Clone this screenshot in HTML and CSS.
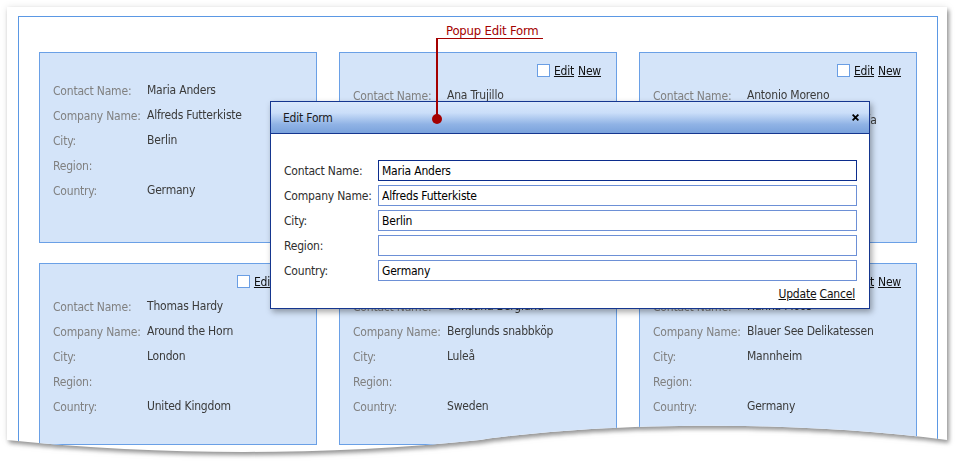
FILE: index.html
```html
<!DOCTYPE html>
<html lang="en">
<head>
<meta charset="utf-8">
<title>Popup Edit Form</title>
<link rel="stylesheet" href="styles.css">
</head>
<body>
<div class="stage">
  <div class="shot">
    <div class="paper">
      <div class="frame">
        <div class="card card--editing">
          <div class="row"><span class="lbl">Contact Name:</span><span class="val">Maria Anders</span></div>
          <div class="row"><span class="lbl">Company Name:</span><span class="val">Alfreds Futterkiste</span></div>
          <div class="row"><span class="lbl">City:</span><span class="val">Berlin</span></div>
          <div class="row"><span class="lbl">Region:</span><span class="val"></span></div>
          <div class="row"><span class="lbl">Country:</span><span class="val">Germany</span></div>
        </div>
        <div class="card">
          <div class="card-head"><span class="check"></span><a class="link" href="#">Edit</a><a class="link" href="#">New</a></div>
          <div class="row"><span class="lbl">Contact Name:</span><span class="val">Ana Trujillo</span></div>
          <div class="row"><span class="lbl">Company Name:</span><span class="val">Ana Trujillo Emparedados y helados</span></div>
          <div class="row"><span class="lbl">City:</span><span class="val">México D.F.</span></div>
          <div class="row"><span class="lbl">Region:</span><span class="val"></span></div>
          <div class="row"><span class="lbl">Country:</span><span class="val">Mexico</span></div>
        </div>
        <div class="card">
          <div class="card-head"><span class="check"></span><a class="link" href="#">Edit</a><a class="link" href="#">New</a></div>
          <div class="row"><span class="lbl">Contact Name:</span><span class="val">Antonio Moreno</span></div>
          <div class="row"><span class="lbl">Company Name:</span><span class="val">Antonio Moreno Taquería</span></div>
          <div class="row"><span class="lbl">City:</span><span class="val">México D.F.</span></div>
          <div class="row"><span class="lbl">Region:</span><span class="val"></span></div>
          <div class="row"><span class="lbl">Country:</span><span class="val">Mexico</span></div>
        </div>
        <div class="card">
          <div class="card-head"><span class="check"></span><a class="link" href="#">Edit</a><a class="link" href="#">New</a></div>
          <div class="row"><span class="lbl">Contact Name:</span><span class="val">Thomas Hardy</span></div>
          <div class="row"><span class="lbl">Company Name:</span><span class="val">Around the Horn</span></div>
          <div class="row"><span class="lbl">City:</span><span class="val">London</span></div>
          <div class="row"><span class="lbl">Region:</span><span class="val"></span></div>
          <div class="row"><span class="lbl">Country:</span><span class="val">United Kingdom</span></div>
        </div>
        <div class="card">
          <div class="card-head"><span class="check"></span><a class="link" href="#">Edit</a><a class="link" href="#">New</a></div>
          <div class="row"><span class="lbl">Contact Name:</span><span class="val">Christina Berglund</span></div>
          <div class="row"><span class="lbl">Company Name:</span><span class="val">Berglunds snabbköp</span></div>
          <div class="row"><span class="lbl">City:</span><span class="val">Luleå</span></div>
          <div class="row"><span class="lbl">Region:</span><span class="val"></span></div>
          <div class="row"><span class="lbl">Country:</span><span class="val">Sweden</span></div>
        </div>
        <div class="card">
          <div class="card-head"><span class="check"></span><a class="link" href="#">Edit</a><a class="link" href="#">New</a></div>
          <div class="row"><span class="lbl">Contact Name:</span><span class="val">Hanna Moos</span></div>
          <div class="row"><span class="lbl">Company Name:</span><span class="val">Blauer See Delikatessen</span></div>
          <div class="row"><span class="lbl">City:</span><span class="val">Mannheim</span></div>
          <div class="row"><span class="lbl">Region:</span><span class="val"></span></div>
          <div class="row"><span class="lbl">Country:</span><span class="val">Germany</span></div>
        </div>
      </div>
    </div>
  </div>

  <div class="popup">
    <div class="popup-head">
      <span class="popup-title">Edit Form</span>
      <svg class="close" width="7" height="7" viewBox="0 0 7 7"><path d="M0.6 0.6 L6.4 6.4 M6.4 0.6 L0.6 6.4" stroke="#000" stroke-width="1.8" fill="none"/></svg>
    </div>
    <div class="popup-body">
      <label class="f-lbl">Contact Name:</label><input class="f-input f-input--focus" value="Maria Anders">
      <label class="f-lbl">Company Name:</label><input class="f-input" value="Alfreds Futterkiste">
      <label class="f-lbl">City:</label><input class="f-input" value="Berlin">
      <label class="f-lbl">Region:</label><input class="f-input" value="">
      <label class="f-lbl">Country:</label><input class="f-input" value="Germany">
    </div>
    <div class="popup-foot"><a class="link" href="#">Update</a> <a class="link" href="#">Cancel</a></div>
  </div>

  <div class="callout-label">Popup Edit Form</div>
  <div class="callout-h"></div>
  <div class="callout-v"></div>
  <div class="callout-dot"></div>
</div>
</body>
</html>
```
FILE: styles.css
```css
* { box-sizing: border-box; }
html, body { margin: 0; padding: 0; background: #fff; }
body {
  font-family: "DejaVu Sans Condensed", "DejaVu Sans", sans-serif;
  font-size: 12px;
  letter-spacing: -0.2px;
  color: #333;
}
.stage {
  position: relative;
  width: 960px;
  height: 470px;
  overflow: hidden;
}
.shot {
  padding: 7px 0 0 7px;
  filter: drop-shadow(2px 3px 2px rgba(0,0,0,0.38)) drop-shadow(0 0 3px rgba(0,0,0,0.10));
}
.paper {
  width: 940px;
  height: 455px;
  background: #fff;
  overflow: hidden;
  clip-path: path('M0 0 H940 V433 C793 413 593 415 473 433 C323 449 153 449 0 433 Z');
}
.frame {
  margin: 9px 0 0 11px;
  width: 920px;
  height: 470px;
  border: 1px solid #5b98e4;
  padding: 35px 20px 0;
  display: grid;
  grid-template-columns: repeat(3, 1fr);
  grid-template-rows: 191px 182px;
  gap: 20px 22px;
  align-content: start;
}
.card {
  border: 1px solid #6aa0e6;
  background: #d4e4f9;
  padding: 5px 15px 0 13px;
  overflow: hidden;
}
.card--editing { padding-top: 25px; }
.card-head {
  height: 25px;
  display: flex;
  justify-content: flex-end;
  align-items: center;
  gap: 4px;
}
.check {
  width: 13px;
  height: 13px;
  background: #fff;
  border: 1px solid #6a9ee4;
}
.link { color: #111; text-decoration: underline; }
.row {
  display: grid;
  grid-template-columns: 94px 1fr;
  min-height: 25px;
  align-items: center;
}
.lbl { color: #808080; }
.val { color: #3a3a3a; line-height: 15px; }

.popup {
  position: absolute;
  left: 270px;
  top: 101px;
  width: 600px;
  height: 208px;
  border: 1px solid #15368f;
  background: #fff;
  box-shadow: 2px 3px 6px rgba(0,0,0,0.35);
}
.popup-head {
  height: 32px;
  border-bottom: 1px solid #15368f;
  background: linear-gradient(to bottom, #d9e8fc 0%, #cadef9 35%, #90b3e5 72%, #7aa2dc 100%);
  display: flex;
  align-items: center;
  justify-content: space-between;
  padding: 0 10px 0 12px;
}
.popup-title { color: #1b1b1b; }
.close { display: block; }
.popup-body {
  padding: 26px 12px 0 13px;
  display: grid;
  grid-template-columns: 94px 1fr;
  grid-auto-rows: 21px;
  row-gap: 4px;
  align-items: center;
}
.f-lbl { color: #2e2e2e; padding-top: 1px; }
.f-input {
  height: 21px;
  border: 1px solid #6d90d6;
  padding: 0 3px;
  font: inherit;
  letter-spacing: inherit;
  color: #000;
  background: #fff;
  outline: none;
}
.f-input--focus { border-color: #0c2d8d; }
.popup-foot {
  margin-top: 4px;
  line-height: 18px;
  text-align: right;
  padding-right: 14px;
}

.callout-label {
  position: absolute;
  left: 446px;
  top: 23px;
  font-size: 13px;
  line-height: 15px;
  color: #a40000;
}
.callout-h {
  position: absolute;
  left: 436px;
  top: 38px;
  width: 107px;
  height: 1px;
  background: #a40000;
}
.callout-v {
  position: absolute;
  left: 436px;
  top: 38px;
  width: 2px;
  height: 80px;
  background: #a40000;
}
.callout-dot {
  position: absolute;
  left: 432px;
  top: 114px;
  width: 10px;
  height: 10px;
  border-radius: 50%;
  background: #a40000;
}
```
